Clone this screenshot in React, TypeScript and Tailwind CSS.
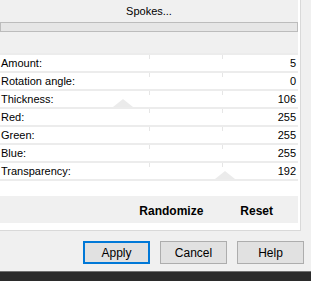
import React from "react";

const rows = [
  { label: "Amount:", value: "5" },
  { label: "Rotation angle:", value: "0" },
  { label: "Thickness:", value: "106", thumb: 113 },
  { label: "Red:", value: "255" },
  { label: "Green:", value: "255" },
  { label: "Blue:", value: "255" },
  { label: "Transparency:", value: "192", thumb: 215 },
];

function SliderRow({ label, value, thumb }: { label: string; value: string; thumb?: number }) {
  return (
    <div className="relative h-[18px] border-t-2 border-[#ececec] bg-white flex items-center justify-between pl-[1px] pr-[2px]">
      {/* faint ticks of the ghosted slider track */}
      <span className="absolute top-0 left-[149px] w-px h-[4px] bg-[#e6e6e6]" />
      <span className="absolute top-0 left-[222px] w-px h-[4px] bg-[#e6e6e6]" />
      {thumb !== undefined && (
        <svg
          className="absolute bottom-0"
          style={{ left: thumb }}
          width="20"
          height="8"
          viewBox="0 0 20 8"
        >
          <polygon points="10,0 20,8 0,8" fill="#ebebeb" />
        </svg>
      )}
      <span className="relative">{label}</span>
      <span className="relative">{value}</span>
    </div>
  );
}

export default function App() {
  return (
    <div
      className="w-[311px] h-[281px] bg-[#f0f0f0] flex flex-col overflow-hidden text-[11px] text-black"
      style={{ fontFamily: '"Liberation Sans", Arial, sans-serif' }}
    >
      {/* Effect panel */}
      <div className="w-[301px] h-[231px] shrink-0 bg-white border-r border-b border-[#d9d9d9] pr-[2px] pb-[7px] flex flex-col">
        <div className="h-[53px] bg-[#f0f0f0] flex flex-col">
          <div className="h-[22px] flex items-center justify-center">Spokes...</div>
          <div className="h-[10px] bg-[#e6e6e6] border border-[#bcbcbc]" />
        </div>

        {rows.map((r) => (
          <SliderRow key={r.label} {...r} />
        ))}
        <div className="flex-1 border-t-2 border-[#ececec] bg-white" />

        <div className="h-[27px] bg-[#f0f0f0] flex items-center justify-end gap-[37px] pr-[25px] pt-[2px] text-[12px] font-bold">
          <span>Randomize</span>
          <span>Reset</span>
        </div>
      </div>

      {/* Dialog buttons */}
      <div className="mt-[10px] h-[23px] flex gap-[10px] pl-[83px] text-[12px]">
        <button className="w-[67px] h-full bg-[#e1e1e1] border-2 border-[#0078d7]">Apply</button>
        <button className="w-[67px] h-full bg-[#e1e1e1] border border-[#adadad]">Cancel</button>
        <button className="w-[67px] h-full bg-[#e1e1e1] border border-[#adadad]">Help</button>
      </div>

      <div className="mt-[7px] flex-1 bg-[#2b2b2b] border-t border-[#707070]" />
    </div>
  );
}
